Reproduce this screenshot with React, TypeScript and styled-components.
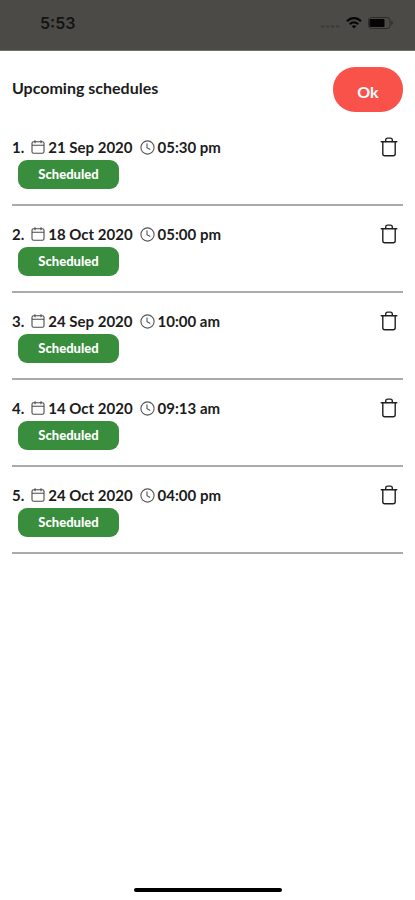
import React from "react";
import styled, { createGlobalStyle } from "styled-components";

const GlobalStyle = createGlobalStyle`
  *, *::before, *::after { box-sizing: border-box; }
  body {
    margin: 0;
    background: #ffffff;
    color: #1c1c1c;
    font-family: Lato, "Liberation Sans", sans-serif;
  }
`;

const Screen = styled.div`
  display: flex;
  flex-direction: column;
  min-height: 100vh;
`;

const StatusBar = styled.header`
  display: flex;
  align-items: center;
  justify-content: space-between;
  height: 51px;
  padding: 0 21px 4px 40px;
  background: #4b4a46;
  border-bottom: 1px solid #73726f;
  color: #141414;
`;

const Clock = styled.time`
  font: 600 16px/20px Inter, sans-serif;
`;

const StatusIcons = styled.div`
  display: flex;
  align-items: center;
  gap: 5px;
`;

const Content = styled.main`
  flex: 1;
  padding: 16px 12px 0;
`;

const TitleRow = styled.div`
  display: flex;
  align-items: center;
  justify-content: space-between;
  height: 45px;
`;

const Title = styled.h1`
  margin: 0;
  padding-bottom: 4px;
  font-size: 16px;
  line-height: 20px;
  font-weight: 700;
`;

const OkButton = styled.button`
  width: 70px;
  height: 45px;
  padding: 5px 0 0;
  border: 0;
  border-radius: 22px;
  background: #f9524a;
  color: #ffffff;
  font: 700 16px/20px Lato, sans-serif;
  cursor: pointer;
`;

const List = styled.ol`
  margin: 7px 0 0;
  padding: 0;
  list-style: none;
`;

const Item = styled.li`
  display: flex;
  align-items: flex-start;
  justify-content: space-between;
  padding: 18px 0 15px;
  border-bottom: 2px solid #ababab;
`;

const Details = styled.div`
  display: flex;
  flex-direction: column;
  gap: 3px;
`;

const When = styled.div`
  display: flex;
  align-items: center;
  height: 20px;
  font-size: 15px;
  line-height: 20px;
  font-weight: 700;
`;

const Index = styled.span`
  margin-right: 7px;
`;

const Stamp = styled.time`
  display: flex;
  align-items: center;
  gap: 3px;
  margin-right: 7px;
`;

const Badge = styled.span`
  width: 101px;
  margin-left: 6px;
  border-radius: 9px;
  background: #388e3c;
  color: #ffffff;
  font-size: 13px;
  line-height: 29px;
  font-weight: 900;
  text-align: center;
`;

const DeleteButton = styled.button`
  display: flex;
  margin-right: 5px;
  padding: 0;
  border: 0;
  background: none;
  color: #202020;
  cursor: pointer;
`;

const HomeBar = styled.footer`
  display: flex;
  justify-content: center;
  padding: 16px 0 8px;

  &::before {
    content: "";
    width: 148px;
    height: 4px;
    border-radius: 2px;
    background: #000000;
  }
`;

const SignalIcon = () => (
  <svg width="20" height="14" viewBox="0 0 20 14" fill="#3a3936" aria-hidden="true">
    {[0, 5, 10, 15].map((x) => (
      <rect key={x} x={x} y="9.5" width="3.4" height="2" rx="1" />
    ))}
  </svg>
);

const WifiIcon = () => (
  <svg width="16" height="14" viewBox="0 0 16 14" fill="none" stroke="#080808" strokeWidth="2.3" aria-hidden="true">
    <path d="M1 5.2C5 1.2 11 1.2 15 5.2" />
    <path d="M3.8 8.2c2.4-2.4 6-2.4 8.4 0" />
    <path d="M8 12.6 5.7 10.2c1.3-1.2 3.3-1.2 4.6 0z" fill="#080808" stroke="none" />
  </svg>
);

const BatteryIcon = () => (
  <svg width="27" height="14" viewBox="0 0 27 14" aria-hidden="true">
    <rect x="1.5" y="1.5" width="21.5" height="11" rx="3" fill="none" stroke="#2b2a28" />
    <rect x="2.5" y="3" width="15" height="8" rx="1" fill="#050505" />
    <path d="M24.3 4.6c2 .8 2 4 0 4.8z" fill="#2b2a28" />
  </svg>
);

const CalendarIcon = () => (
  <svg width="14" height="14" viewBox="0 0 14 14" fill="none" stroke="#4a4a4a" strokeWidth="1.1" aria-hidden="true">
    <rect x="1" y="1.7" width="12" height="11.6" rx="1.6" />
    <path d="M1 5.2h12M4 .3v3M10 .3v3" />
  </svg>
);

const ClockIcon = () => (
  <svg width="15" height="15" viewBox="0 0 15 15" fill="none" stroke="#555555" strokeWidth="1.1" strokeLinecap="round" aria-hidden="true">
    <circle cx="7.5" cy="7.5" r="6.6" />
    <path d="M7 3.7v4l2.8 1.6" />
  </svg>
);

const TrashIcon = () => (
  <svg width="18" height="20" viewBox="0 0 18 20" fill="none" stroke="currentColor" strokeWidth="1.4" strokeLinecap="round" strokeLinejoin="round" aria-hidden="true">
    <path d="M1.2 4.8h15.6" />
    <path d="M2.8 4.8v11.9c0 1.3.8 2 2 2h8.4c1.2 0 2-.7 2-2V4.8" />
    <path d="M5.7 4.5V3c0-1.1.8-1.9 1.9-1.9h2.8c1.1 0 1.9.8 1.9 1.9v1.5" />
  </svg>
);

const schedules = [
  { date: "21 Sep 2020", time: "05:30 pm" },
  { date: "18 Oct 2020", time: "05:00 pm" },
  { date: "24 Sep 2020", time: "10:00 am" },
  { date: "14 Oct 2020", time: "09:13 am" },
  { date: "24 Oct 2020", time: "04:00 pm" },
];

export default function App() {
  return (
    <>
      <GlobalStyle />
      <Screen>
        <StatusBar>
          <Clock>5:53</Clock>
          <StatusIcons>
            <SignalIcon />
            <WifiIcon />
            <BatteryIcon />
          </StatusIcons>
        </StatusBar>
        <Content>
          <TitleRow>
            <Title>Upcoming schedules</Title>
            <OkButton type="button">Ok</OkButton>
          </TitleRow>
          <List>
            {schedules.map(({ date, time }, i) => (
              <Item key={date}>
                <Details>
                  <When>
                    <Index>{i + 1}.</Index>
                    <Stamp>
                      <CalendarIcon />
                      {date}
                    </Stamp>
                    <Stamp>
                      <ClockIcon />
                      {time}
                    </Stamp>
                  </When>
                  <Badge>Scheduled</Badge>
                </Details>
                <DeleteButton type="button" aria-label={`Delete schedule ${i + 1}`}>
                  <TrashIcon />
                </DeleteButton>
              </Item>
            ))}
          </List>
        </Content>
        <HomeBar />
      </Screen>
    </>
  );
}
